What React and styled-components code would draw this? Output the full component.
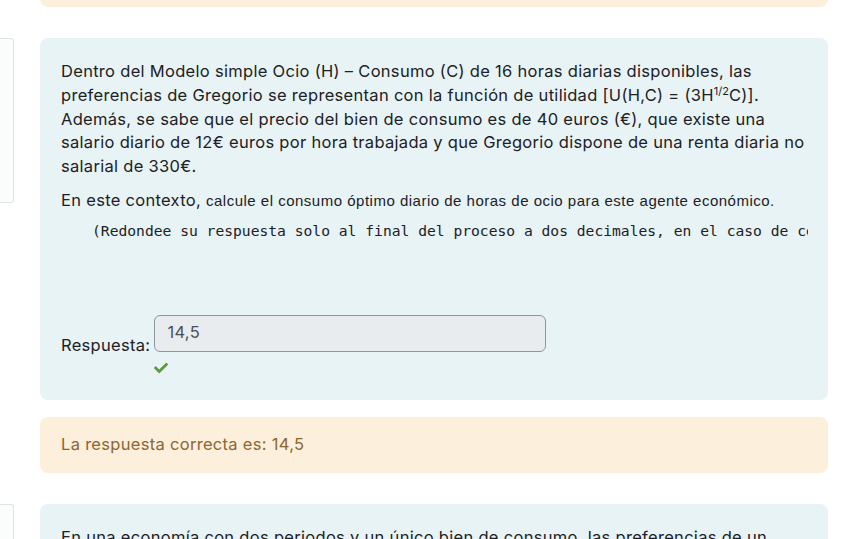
import React from 'react';
import styled, { createGlobalStyle } from 'styled-components';
import { FaCheck } from 'react-icons/fa';

const GlobalStyle = createGlobalStyle`
  html, body {
    margin: 0;
    padding: 0;
    background: #fff;
    overflow: hidden;
  }

  body {
    font-family: Inter, "Noto Sans", "Liberation Sans", sans-serif;
    font-size: 16.5px;
    letter-spacing: 0.3px;
    line-height: 23.75px;
    color: #1d2125;
  }
`;

const Page = styled.div`
  margin-top: -50px;
  padding-right: 20px;
  display: flex;
  flex-direction: column;
  gap: 31px;
`;

const Question = styled.div`
  display: grid;
  grid-template-columns: 14px 1fr;
  column-gap: 26px;
  align-items: start;
`;

const InfoBox = styled.div`
  height: ${(p) => p.$height}px;
  border: 1px solid #dee2e6;
  border-left: none;
  border-radius: 0 3px 3px 0;
  background: #fbfcfc;
`;

const Content = styled.div`
  display: flex;
  flex-direction: column;
  gap: 17px;
  min-width: 0;
`;

const Formulation = styled.div`
  background: #e7f3f5;
  border-radius: 8px;
  padding: 22px 20px 25px 21px;

  p {
    margin: 0 0 10px;
  }
`;

const Line = styled.span`
  display: block;
  white-space: nowrap;
`;

const Small = styled.span`
  font-family: "Liberation Sans", Arial, sans-serif;
  font-size: 15px;
  letter-spacing: 0.5px;
`;

const Sup = styled.sup`
  font-size: 11px;
  letter-spacing: 0;
  line-height: 0;
  vertical-align: 0;
  position: relative;
  top: -6px;
`;

const Pre = styled.pre`
  margin: -3px 0 73px;
  padding-left: 31px;
  overflow: hidden;
  font-family: "DejaVu Sans Mono", "Liberation Mono", monospace;
  font-size: 14.65px;
  letter-spacing: 0;
  line-height: 22px;
  color: #1d2125;
  white-space: pre;
`;

const AnswerRow = styled.div`
  display: flex;
  align-items: flex-start;
  gap: 4px;
`;

const Label = styled.span`
  padding-top: 19px;
`;

const AnswerCol = styled.div`
  display: flex;
  flex-direction: column;
  align-items: flex-start;
`;

const Input = styled.div`
  box-sizing: border-box;
  width: 392px;
  height: 37px;
  padding: 0 12px;
  display: flex;
  align-items: center;
  background: #e9ecef;
  border: 1px solid #8f959e;
  border-radius: 6px;
  color: #495057;
`;

const Check = styled.span`
  margin: 9px 0 0 0;
  color: #5f9a3a;
  font-size: 14px;
  line-height: 0;
  display: flex;
`;

const Feedback = styled.div`
  background: #fcefdc;
  color: #8e662e;
  border-radius: 8px;
  padding: 16px 20px 17px 21px;
  height: ${(p) => (p.$height ? `${p.$height}px` : 'auto')};
  box-sizing: border-box;
`;

const statement = [
  'Dentro del Modelo simple Ocio (H) – Consumo (C) de 16 horas diarias disponibles, las',
  <>
    preferencias de Gregorio se representan con la función de utilidad [U(H,C) = (3H
    <Sup>1/2</Sup>C)].
  </>,
  'Además, se sabe que el precio del bien de consumo es de 40 euros (€), que existe una',
  'salario diario de 12€ euros por hora trabajada y que Gregorio dispone de una renta diaria no',
  'salarial de 330€.',
];

const App = () => (
  <>
    <GlobalStyle />
    <Page>
      <Question>
        <span />
        <Content>
          <Feedback $height={57} />
        </Content>
      </Question>

      <Question>
        <InfoBox $height={163} />
        <Content>
          <Formulation>
            <p>
              {statement.map((line, i) => (
                <Line key={i}>{line}</Line>
              ))}
            </p>
            <p>
              En este contexto,{' '}
              <Small>calcule el consumo óptimo diario de horas de ocio para este agente económico.</Small>
            </p>
            <Pre>
              (Redondee su respuesta solo al final del proceso a dos decimales, en el caso de ceros
              a la derecha, no los escriba)
            </Pre>
            <AnswerRow>
              <Label>Respuesta:</Label>
              <AnswerCol>
                <Input>14,5</Input>
                <Check>
                  <FaCheck />
                </Check>
              </AnswerCol>
            </AnswerRow>
          </Formulation>
          <Feedback>La respuesta correcta es: 14,5</Feedback>
        </Content>
      </Question>

      <Question>
        <InfoBox $height={163} />
        <Content>
          <Formulation>
            <p>
              <Line>
                En una economía con dos periodos y un único bien de consumo, las preferencias de un
              </Line>
              <Line>consumidor se representan mediante la función de utilidad intertemporal.</Line>
            </p>
          </Formulation>
        </Content>
      </Question>
    </Page>
  </>
);

export default App;
